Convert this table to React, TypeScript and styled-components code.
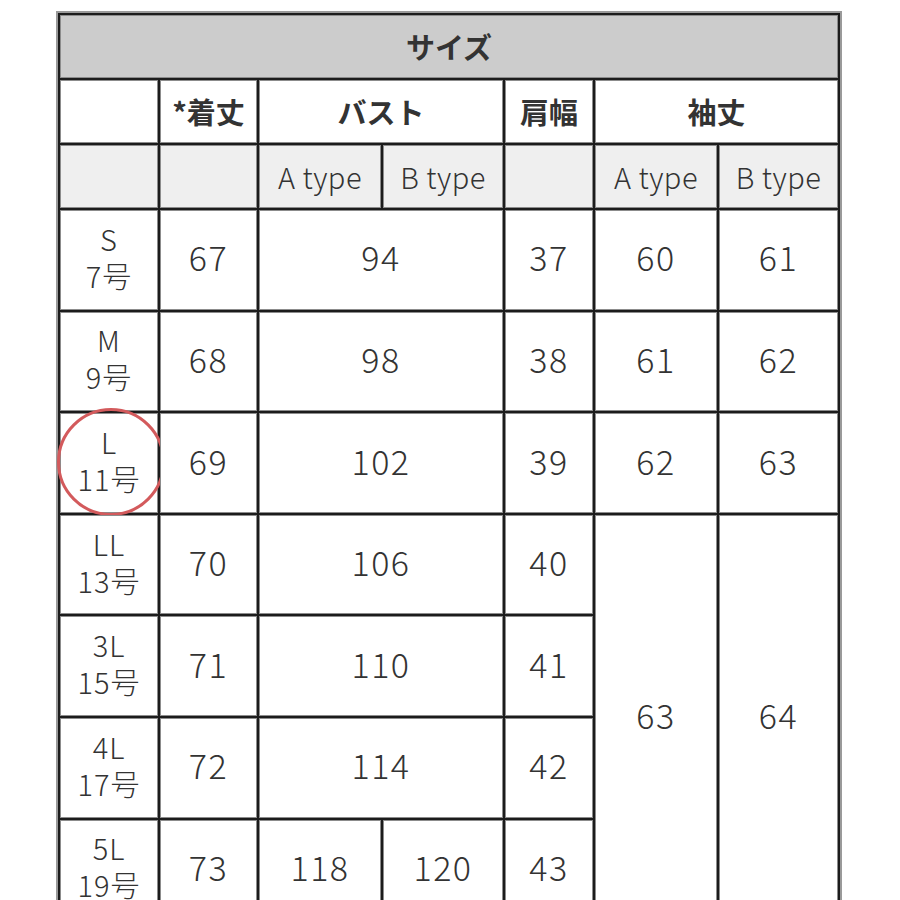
import React from "react";
import styled, { createGlobalStyle, css } from "styled-components";

const Global = createGlobalStyle`
  html, body { margin: 0; padding: 0; background: #ffffff; }
  body { font-family: "Noto Sans CJK JP", "Noto Sans", sans-serif; color: #333; }
`;

const Page = styled.div`
  padding: 11px 0 0 56px;
`;

const SizeTable = styled.table`
  width: 786px;
  table-layout: fixed;
  border-collapse: separate;
  border-spacing: 2px;
  border: 2px solid #9a9a9a;
  background: #1c1c1c;
`;

type Tone = "title" | "head" | "sub" | "data";

const toneBg: Record<Tone, string> = {
  title: "#cccccc",
  head: "#ffffff",
  sub: "#efefef",
  data: "#ffffff",
};

const Cell = styled.td<{ $tone: Tone; $h?: number }>`
  position: relative;
  padding: 0;
  border: 1px solid #8c8c8c;
  background: ${(p) => toneBg[p.$tone]};
  text-align: center;
  vertical-align: middle;
  color: #333;
  ${(p) => (p.$h ? `height: ${p.$h}px;` : "")}
  ${(p) =>
    p.$tone === "title" || p.$tone === "head"
      ? css`
          font-weight: 700;
          font-size: 29px;
          line-height: 1.2;
        `
      : p.$tone === "sub"
      ? css`
          font-size: 29px;
          font-weight: 300;
          line-height: 1.2;
          letter-spacing: 0.5px;
        `
      : css`
          font-size: 34px;
          font-weight: 300;
          line-height: 1.2;
          letter-spacing: 1.5px;
          padding-bottom: 4px;
        `}
`;

const SizeLabel = styled.span`
  display: block;
  font-size: 29px;
  line-height: 37px;
  letter-spacing: 1px;
  margin-top: -2px;
`;

const Mark = styled.span`
  position: absolute;
  left: 50%;
  top: 50%;
  width: 102px;
  height: 102px;
  margin-left: -52px;
  margin-top: -55px;
  border: 3px solid #d35a5c;
  border-radius: 50%;
  pointer-events: none;
`;

type Row = {
  size: string;
  go: string;
  length: number;
  bust: number | [number, number];
  shoulder: number;
  sleeve?: [number, number];
  sleeveSpan?: number;
  marked?: boolean;
};

const rows: Row[] = [
  { size: "S", go: "7号", length: 67, bust: 94, shoulder: 37, sleeve: [60, 61] },
  { size: "M", go: "9号", length: 68, bust: 98, shoulder: 38, sleeve: [61, 62] },
  { size: "L", go: "11号", length: 69, bust: 102, shoulder: 39, sleeve: [62, 63], marked: true },
  { size: "LL", go: "13号", length: 70, bust: 106, shoulder: 40, sleeve: [63, 64], sleeveSpan: 4 },
  { size: "3L", go: "15号", length: 71, bust: 110, shoulder: 41 },
  { size: "4L", go: "17号", length: 72, bust: 114, shoulder: 42 },
  { size: "5L", go: "19号", length: 73, bust: [118, 120], shoulder: 43 },
];

export default function App() {
  return (
    <Page>
      <Global />
      <SizeTable>
        <colgroup>
          <col style={{ width: 98 }} />
          <col style={{ width: 97 }} />
          <col style={{ width: 122 }} />
          <col style={{ width: 120 }} />
          <col style={{ width: 88 }} />
          <col style={{ width: 122 }} />
          <col style={{ width: 119 }} />
        </colgroup>
        <tbody>
          <tr>
            <Cell as="th" $tone="title" $h={61} colSpan={7}>
              サイズ
            </Cell>
          </tr>
          <tr>
            <Cell as="th" $tone="head" $h={61} />
            <Cell as="th" $tone="head">*着丈</Cell>
            <Cell as="th" $tone="head" colSpan={2}>バスト</Cell>
            <Cell as="th" $tone="head">肩幅</Cell>
            <Cell as="th" $tone="head" colSpan={2}>袖丈</Cell>
          </tr>
          <tr>
            <Cell $tone="sub" $h={61} />
            <Cell $tone="sub" />
            <Cell $tone="sub">A type</Cell>
            <Cell $tone="sub">B type</Cell>
            <Cell $tone="sub" />
            <Cell $tone="sub">A type</Cell>
            <Cell $tone="sub">B type</Cell>
          </tr>
          {rows.map((r) => (
            <tr key={r.size}>
              <Cell $tone="data" $h={93.6}>
                <SizeLabel>
                  {r.size}
                  <br />
                  {r.go}
                </SizeLabel>
                {r.marked && <Mark />}
              </Cell>
              <Cell $tone="data">{r.length}</Cell>
              {Array.isArray(r.bust) ? (
                <>
                  <Cell $tone="data">{r.bust[0]}</Cell>
                  <Cell $tone="data">{r.bust[1]}</Cell>
                </>
              ) : (
                <Cell $tone="data" colSpan={2}>
                  {r.bust}
                </Cell>
              )}
              <Cell $tone="data">{r.shoulder}</Cell>
              {r.sleeve && (
                <>
                  <Cell $tone="data" rowSpan={r.sleeveSpan}>
                    {r.sleeve[0]}
                  </Cell>
                  <Cell $tone="data" rowSpan={r.sleeveSpan}>
                    {r.sleeve[1]}
                  </Cell>
                </>
              )}
            </tr>
          ))}
        </tbody>
      </SizeTable>
    </Page>
  );
}
